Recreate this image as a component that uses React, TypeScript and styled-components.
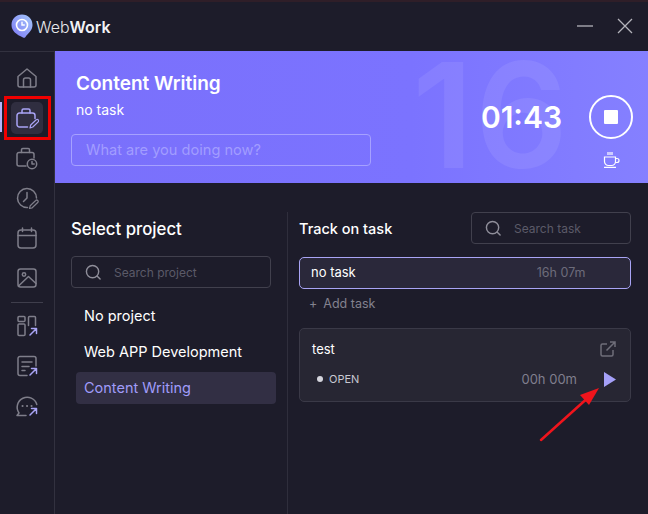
import React from 'react'
import styled, { createGlobalStyle } from 'styled-components'

const GlobalStyle = createGlobalStyle`
  html, body { margin: 0; padding: 0; background: #1d1c2a; }
  * { box-sizing: border-box; }
  body { font-family: "Inter", "Noto Sans", "Liberation Sans", sans-serif; }
`

const stroke = '#7f7e8a'
const accent = '#a9a4f5'

function NavIcon({ name, active }: { name: string; active?: boolean }) {
  const c = active ? accent : stroke
  const common = { fill: 'none', stroke: c, strokeWidth: 1.5, strokeLinecap: 'round' as const, strokeLinejoin: 'round' as const }
  const arrow = (
    <g fill="none" stroke={accent} strokeWidth={1.5} strokeLinecap="round" strokeLinejoin="round">
      <path d="M15 21l6.5-6.5M16.5 14.5h5v5" />
    </g>
  )
  switch (name) {
    case 'home':
      return <svg width="24" height="24" viewBox="0 0 24 24" {...common}><path d="M3 10.5 12 3l9 7.5V19a2 2 0 0 1-2 2H5a2 2 0 0 1-2-2z" /><path d="M8.5 21v-7a2 2 0 0 1 2-2h3a2 2 0 0 1 2 2v7" /></svg>
    case 'task':
      return <svg width="24" height="24" viewBox="0 0 24 24" {...common}><path d="M12.5 21H4.5A2.5 2.5 0 0 1 2 18.5v-9A2.5 2.5 0 0 1 4.5 7h13A2.5 2.5 0 0 1 20 9.5v3" /><path d="M7 7V4.5A1.5 1.5 0 0 1 8.5 3h5A1.5 1.5 0 0 1 15 4.5V7" /><path d="M15 22l.7-3 5.5-5.2a1.4 1.4 0 0 1 2 2L17.8 21z" strokeWidth={1.2} /></svg>
    case 'timesheet':
      return <svg width="24" height="24" viewBox="0 0 24 24" {...common}><path d="M11 20H4a2 2 0 0 1-2-2V8.5a2 2 0 0 1 2-2h13a2 2 0 0 1 2 2V12" /><path d="M6.5 6.5V3.8A1.3 1.3 0 0 1 7.8 2.5h5.4a1.3 1.3 0 0 1 1.3 1.3v2.7" /><circle cx="17" cy="18" r="4.7" /><path d="M17 15.5V18h2.2" /></svg>
    case 'clock':
      return <svg width="24" height="24" viewBox="0 0 24 24" {...common}><path d="M12.5 21.5A9.5 9.5 0 1 1 21.5 12" /><path d="M12 6.5V12l-3.5 3.5" /><path d="M14.5 22.5l.7-2.8 5.5-5.2a1.4 1.4 0 0 1 2 2l-5.5 5.3z" strokeWidth={1.2} /></svg>
    case 'calendar':
      return <svg width="24" height="24" viewBox="0 0 24 24" {...common}><rect x="3" y="4" width="18" height="18" rx="3" /><path d="M3 9.5h18M7.5 2v3.5M16.5 2v3.5" /></svg>
    case 'image':
      return <svg width="24" height="24" viewBox="0 0 24 24" {...common}><rect x="3" y="3" width="18" height="18" rx="2.5" /><circle cx="9" cy="8.5" r="1.7" /><path d="m3.5 20 10-9.5 7.5 7" /></svg>
    case 'board':
      return <svg width="24" height="24" viewBox="0 0 24 24" {...common}><rect x="3" y="2.5" width="7" height="5" rx="1" /><rect x="3" y="10" width="7" height="11.5" rx="1" /><path d="M13.5 11.5v-8a1 1 0 0 1 1-1h5a1 1 0 0 1 1 1v8" />{arrow}</svg>
    case 'note':
      return <svg width="24" height="24" viewBox="0 0 24 24" {...common}><path d="M12 21.5H5a2 2 0 0 1-2-2v-15a2 2 0 0 1 2-2h14a2 2 0 0 1 2 2V12" /><path d="M7 8h10M7 12.5h7M7 16.5h3" />{arrow}</svg>
    default:
      return <svg width="24" height="24" viewBox="0 0 24 24" {...common}><path d="M21.8 10.5A10 10 0 1 0 4 19l-2 2.5h9" /><path d="M7.5 12h.1M12 12h.1M16.5 12h.1" strokeWidth={2} />{arrow}</svg>
  }
}

function SearchIcon() {
  return (
    <svg width="17" height="17" viewBox="0 0 18 18" fill="none" stroke="#8f8e9a" strokeWidth="1.5" strokeLinecap="round">
      <circle cx="8" cy="8" r="6.5" />
      <path d="m13 13 3 3" />
    </svg>
  )
}

export default function App() {
  return (
    <Window>
      <GlobalStyle />
      <TopEdge />
      <TitleBar>
        <Brand>
          <LogoMark width="22" height="24" viewBox="0 0 22 24">
            <defs>
              <linearGradient id="logo" x1="0" y1="1" x2="1" y2="0">
                <stop offset="0" stopColor="#7d78f5" />
                <stop offset="1" stopColor="#a5c8fa" />
              </linearGradient>
            </defs>
            <path d="M11 .5C5 .5.5 5 .5 11c0 6 5 9.5 11.5 12.5 1.3.6 2.2 0 2.8-1 1.5-2.5 6.7-5.5 6.7-11.5C21.5 5 17 .5 11 .5z" fill="url(#logo)" />
            <circle cx="11" cy="11" r="5.5" fill="none" stroke="#fff" strokeWidth="1.6" />
            <path d="M11 8.3V11h2.3" fill="none" stroke="#fff" strokeWidth="1.4" strokeLinecap="round" />
          </LogoMark>
          <BrandName>Web<b>Work</b></BrandName>
        </Brand>
        <WindowControls>
          <svg width="16" height="16" viewBox="0 0 16 16" stroke="#b4b3bb" strokeWidth="1.3"><path d="M0 8h16" /></svg>
          <svg width="16" height="16" viewBox="0 0 16 16" stroke="#b4b3bb" strokeWidth="1.3"><path d="m1 1 14 14M15 1 1 15" /></svg>
        </WindowControls>
      </TitleBar>
      <Shell>
        <Sidebar>
          <NavItem><NavIcon name="home" /></NavItem>
          <NavItem $active><NavIcon name="task" active /></NavItem>
          <NavItem><NavIcon name="timesheet" /></NavItem>
          <NavItem><NavIcon name="clock" /></NavItem>
          <NavItem><NavIcon name="calendar" /></NavItem>
          <NavItem><NavIcon name="image" /></NavItem>
          <NavDivider />
          <NavItem><NavIcon name="board" /></NavItem>
          <NavItem><NavIcon name="note" /></NavItem>
          <NavItem><NavIcon name="chat" /></NavItem>
        </Sidebar>
        <Main>
          <Banner>
            <BigHours>16</BigHours>
            <BannerInfo>
              <BannerTitle>Content Writing</BannerTitle>
              <BannerTask>no task</BannerTask>
              <WhatInput>What are you doing now?</WhatInput>
            </BannerInfo>
            <Timer>01:43</Timer>
            <Controls>
              <StopButton><StopSquare /></StopButton>
              <CoffeeIcon width="18" height="17" viewBox="0 0 18 17" fill="none" stroke="#fff" strokeWidth="1.2">
                <path d="M1.5 6h11v4.5a4 4 0 0 1-4 4h-3a4 4 0 0 1-4-4z" />
                <path d="M12.5 7.5H14a2 2 0 0 1 0 4h-1.8M1 16.3h12M5 1v3M7 1v3M9 1v3" />
              </CoffeeIcon>
            </Controls>
          </Banner>
          <Body>
            <ProjectColumn>
              <ColumnTitle>Select project</ColumnTitle>
              <SearchBox>
                <SearchIcon />
                <SearchText>Search project</SearchText>
              </SearchBox>
              <ProjectList>
                <ProjectItem>No project</ProjectItem>
                <ProjectItem>Web APP Development</ProjectItem>
                <ProjectItem $active>Content Writing</ProjectItem>
              </ProjectList>
            </ProjectColumn>
            <TaskColumn>
              <TaskHeader>
                <TaskTitle>Track on task</TaskTitle>
                <TaskSearch>
                  <SearchIcon />
                  <SearchText>Search task</SearchText>
                </TaskSearch>
              </TaskHeader>
              <NoTaskRow>
                <span>no task</span>
                <NoTaskTime>16h 07m</NoTaskTime>
              </NoTaskRow>
              <AddTask><Plus>+</Plus>Add task</AddTask>
              <TaskCard>
                <TaskCardTop>
                  <TaskName>test</TaskName>
                  <svg width="16" height="16" viewBox="0 0 16 16" fill="none" stroke="#6f6e7a" strokeWidth="1.5">
                    <path d="M7 3H2.5A1.5 1.5 0 0 0 1 4.5v9A1.5 1.5 0 0 0 2.5 15h9a1.5 1.5 0 0 0 1.5-1.5V9" />
                    <path d="M6.5 9.5 15 1M10 1h5v5" />
                  </svg>
                </TaskCardTop>
                <TaskCardBottom>
                  <Status><StatusDot />OPEN</Status>
                  <TaskTime>00h 00m</TaskTime>
                  <svg width="12" height="15" viewBox="0 0 12 15"><path d="M0 0 12 7.5 0 15z" fill="#a5a0f8" /></svg>
                </TaskCardBottom>
              </TaskCard>
            </TaskColumn>
          </Body>
        </Main>
      </Shell>
      <RedBox />
      <RedArrow width="64" height="58" viewBox="0 0 64 58">
        <path d="M2 56 52 11" stroke="#f0141c" strokeWidth="2.5" strokeLinecap="round" />
        <path d="M60 4 50 21l-9-10z" fill="#f0141c" />
      </RedArrow>
    </Window>
  )
}

const Window = styled.div`
  position: relative;
  width: 648px;
  height: 514px;
  overflow: hidden;
  background: #1d1c2a;
  color: #fff;
  display: flex;
  flex-direction: column;
`

const TopEdge = styled.div`
  height: 2px;
  background: #2f1e28;
`

const TitleBar = styled.div`
  height: 49px;
  padding: 0 15px 0 11px;
  display: flex;
  align-items: center;
  justify-content: space-between;
`

const Brand = styled.div`
  display: flex;
  align-items: center;
  gap: 3px;
`

const LogoMark = styled.svg`
  margin-top: -1px;
`

const BrandName = styled.div`
  font-size: 16px;
  color: #e8e8ec;
  font-weight: 300;
  b { font-weight: 600; color: #f2f2f5; }
`

const WindowControls = styled.div`
  display: flex;
  align-items: center;
  gap: 24px;
  margin-top: -2px;
`

const Shell = styled.div`
  flex: 1;
  display: flex;
  min-height: 0;
`

const Sidebar = styled.nav`
  width: 55px;
  flex: none;
  border-right: 1px solid #32313f;
  border-top: 1px solid #32313f;
  padding-top: 10px;
  display: flex;
  flex-direction: column;
  align-items: center;
`

const NavItem = styled.div<{ $active?: boolean }>`
  position: relative;
  width: 32px;
  height: 32px;
  margin-bottom: 8px;
  margin-left: -1px;
  border-radius: 5px;
  display: flex;
  align-items: center;
  justify-content: center;
  background: ${({ $active }) => ($active ? '#302e40' : 'transparent')};
  &::before {
    content: '';
    display: ${({ $active }) => ($active ? 'block' : 'none')};
    position: absolute;
    left: -11px;
    top: 0;
    width: 2px;
    height: 30px;
    background: #b7b2fb;
  }
`

const NavDivider = styled.div`
  width: 32px;
  height: 1px;
  flex: none;
  background: #3f3e4c;
  margin: 0 0 7px -1px;
`

const Main = styled.main`
  flex: 1;
  min-width: 0;
  display: flex;
  flex-direction: column;
`

const Banner = styled.section`
  position: relative;
  height: 132px;
  flex: none;
  overflow: hidden;
  padding: 0 15px 0 16px;
  display: flex;
  background: linear-gradient(90deg, #7a70fb 0%, #7b73ff 60%, #8580ff 100%);
`

const BigHours = styled.div`
  position: absolute;
  left: 357px;
  top: 6px;
  font-size: 146px;
  line-height: 0.8;
  font-weight: 600;
  letter-spacing: 1px;
  color: rgba(255, 255, 255, 0.08);
`

const BannerInfo = styled.div`
  position: relative;
  flex: 1;
  display: flex;
  flex-direction: column;
  padding-top: 22px;
`

const BannerTitle = styled.div`
  margin-left: 5px;
  font-size: 19px;
  line-height: 22px;
  font-weight: 600;
`

const BannerTask = styled.div`
  margin: 5px 0 0 5px;
  font-size: 14px;
  line-height: 20px;
`

const WhatInput = styled.div`
  margin-top: 14px;
  width: 300px;
  height: 32px;
  padding: 0 14px;
  line-height: 30px;
  border: 1px solid #a6a1ff;
  border-radius: 4px;
  font-size: 14.6px;
  color: #a29dff;
`

const Timer = styled.div`
  position: relative;
  margin: 47px 27px 0 0;
  font-size: 30px;
  line-height: 38px;
  font-weight: 600;
`

const Controls = styled.div`
  position: relative;
  display: flex;
  flex-direction: column;
  align-items: center;
  gap: 12px;
  padding-top: 44px;
`

const StopButton = styled.div`
  width: 44px;
  height: 44px;
  border: 2px solid #fff;
  border-radius: 50%;
  display: flex;
  align-items: center;
  justify-content: center;
`

const StopSquare = styled.div`
  width: 14px;
  height: 14px;
  background: #fff;
  border-radius: 1px;
`

const CoffeeIcon = styled.svg`
  margin-left: 2px;
`

const Body = styled.div`
  flex: 1;
  display: flex;
  min-height: 0;
`

const ProjectColumn = styled.section`
  width: 233px;
  flex: none;
  padding: 0 16px;
  border-right: 1px solid #2f2e3c;
  margin-top: 29px;
`

const ColumnTitle = styled.h2`
  margin: 0;
  font-size: 16.8px;
  line-height: 34px;
  font-weight: 500;
`

const SearchBox = styled.div`
  margin-top: 10px;
  width: 200px;
  height: 32px;
  padding: 0 13px;
  border: 1px solid #41404d;
  border-radius: 4px;
  display: flex;
  align-items: center;
  gap: 12px;
`

const SearchText = styled.span`
  font-size: 12px;
  color: #5b5a68;
`

const ProjectList = styled.div`
  margin: 12px 0 0 5px;
  width: 200px;
  display: flex;
  flex-direction: column;
  gap: 4px;
`

const ProjectItem = styled.div<{ $active?: boolean }>`
  height: 32px;
  line-height: 32px;
  padding-left: 8px;
  font-size: 14.5px;
  border-radius: 4px;
  color: ${({ $active }) => ($active ? '#a09cfa' : '#fff')};
  background: ${({ $active }) => ($active ? '#322f44' : 'transparent')};
`

const TaskColumn = styled.section`
  flex: 1;
  min-width: 0;
  padding: 29px 17px 0 11px;
`

const TaskHeader = styled.div`
  height: 32px;
  display: flex;
  align-items: center;
  justify-content: space-between;
`

const TaskTitle = styled.h3`
  margin: 0;
  font-size: 14.5px;
  font-weight: 500;
`

const TaskSearch = styled(SearchBox)`
  margin: 0;
  width: 160px;
`

const NoTaskRow = styled.div`
  margin-top: 13px;
  height: 32px;
  padding: 0 11px 2px;
  display: flex;
  align-items: center;
  font-size: 13px;
  background: #2a283a;
  border: 1px solid #a9a4f5;
  border-radius: 5px;
`

const NoTaskTime = styled.span`
  margin-left: 181px;
  font-size: 12.5px;
  color: #6d6c7b;
`

const AddTask = styled.div`
  margin: 6px 0 0 10px;
  font-size: 12.5px;
  line-height: 18px;
  color: #83828f;
`

const Plus = styled.span`
  margin-right: 6px;
`

const TaskCard = styled.div`
  margin-top: 15px;
  height: 74px;
  padding: 10px 14px 0 12px;
  background: #272633;
  border: 1px solid #3a3947;
  border-radius: 5px;
`

const TaskCardTop = styled.div`
  display: flex;
  align-items: center;
  justify-content: space-between;
  height: 20px;
`

const TaskName = styled.span`
  font-size: 13px;
`

const TaskCardBottom = styled.div`
  margin-top: 10px;
  padding-left: 5px;
  height: 20px;
  display: flex;
  align-items: center;
`

const Status = styled.span`
  flex: 1;
  display: flex;
  align-items: center;
  gap: 6px;
  font-size: 11px;
  color: #c8c8d2;
`

const StatusDot = styled.span`
  width: 6px;
  height: 6px;
  border-radius: 50%;
  background: #d5d5dd;
`

const TaskTime = styled.span`
  margin-right: 27px;
  font-size: 13px;
  color: #807f8e;
`

const RedBox = styled.div`
  position: absolute;
  left: 4px;
  top: 96px;
  width: 47px;
  height: 44px;
  border: 3px solid #f00000;
`

const RedArrow = styled.svg`
  position: absolute;
  left: 539px;
  top: 384px;
`
